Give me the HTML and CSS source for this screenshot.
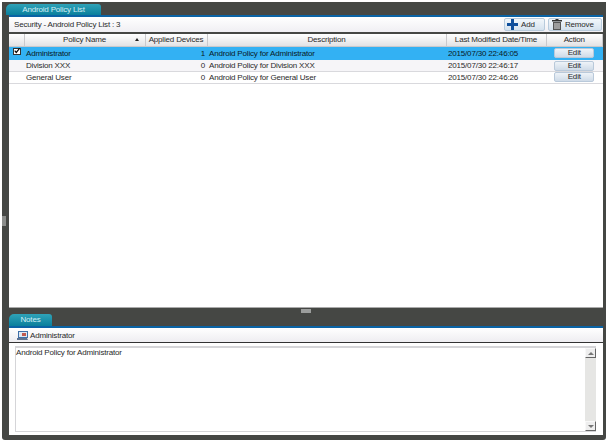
FILE: index.html
```html
<!DOCTYPE html>
<html lang="en">
<head>
  <meta charset="UTF-8" />
  <title>Android Policy List</title>
  <link rel="stylesheet" href="styles.css">
</head>
<body>
  <div class="window">
    <div class="handle-left"></div>

    <div class="tabbar tabbar-top">
      <div class="tab tab-list">Android Policy List</div>
    </div>
    <div class="toolbar">
      <span class="toolbar-title">Security - Android Policy List : 3</span>
      <div class="toolbar-buttons">
        <button class="tool-btn btn-add">
          <svg width="11" height="11" viewBox="0 0 11 11"><path d="M4 0h3v4h4v3H7v4H4V7H0V4h4z" fill="#0f4f9c"/></svg>
          <span>Add</span>
        </button>
        <button class="tool-btn btn-remove">
          <svg width="10" height="11" viewBox="0 0 10 11"><path d="M3.5 0h3v1H10v1.5H0V1h3.5z" fill="#333"/><path d="M1 3h8v8H1z" fill="#555"/><path d="M2.5 4h1v6h-1zM4.5 4h1v6h-1zM6.5 4h1v6h-1z" fill="#e4e4e4"/></svg>
          <span>Remove</span>
        </button>
      </div>
    </div>

    <div class="list-area">
      <table class="grid">
        <colgroup>
          <col class="col-check"><col class="col-name"><col class="col-devices"><col class="col-desc"><col class="col-date"><col class="col-action">
        </colgroup>
        <thead>
          <tr>
            <th></th>
            <th class="sorted">Policy Name<span class="sort-arrow"></span></th>
            <th>Applied Devices</th>
            <th>Description</th>
            <th>Last Modified Date/Time</th>
            <th>Action</th>
          </tr>
        </thead>
        <tbody>
          <tr class="selected">
            <td class="check-cell"><span class="checkbox"><svg width="8" height="8" viewBox="0 0 8 8"><path d="M1 3.5l2 2.5L7.5 0.5" fill="none" stroke="#000" stroke-width="1.6"/></svg></span></td>
            <td>Administrator</td>
            <td class="num">1</td>
            <td>Android Policy for Administrator</td>
            <td>2015/07/30 22:46:05</td>
            <td class="action-cell"><button class="edit-btn">Edit</button></td>
          </tr>
          <tr class="alt">
            <td></td>
            <td>Division XXX</td>
            <td class="num">0</td>
            <td>Android Policy for Division XXX</td>
            <td>2015/07/30 22:46:17</td>
            <td class="action-cell"><button class="edit-btn">Edit</button></td>
          </tr>
          <tr>
            <td></td>
            <td>General User</td>
            <td class="num">0</td>
            <td>Android Policy for General User</td>
            <td>2015/07/30 22:46:26</td>
            <td class="action-cell"><button class="edit-btn">Edit</button></td>
          </tr>
        </tbody>
      </table>
    </div>

    <div class="tabbar tabbar-notes">
      <div class="splitter"></div>
      <div class="tab tab-notes">Notes</div>
    </div>
    <div class="notes-head">
      <svg width="11" height="9" viewBox="0 0 11 9"><path d="M1 0h10v7H1z" fill="#3f6fa8"/><path d="M2 1h8v5H2z" fill="#dfe8f2"/><path d="M0 7h10l1 2H0z" fill="#5f7390"/><path d="M5 2h4v3H5z" fill="#c05a50"/></svg>
      <span>Administrator</span>
    </div>
    <div class="notes-body">
      <div class="notes-box">
        <div class="notes-text">Android Policy for Administrator</div>
        <div class="scrollbar">
          <div class="scroll-btn"><span class="arrow-up"></span></div>
          <div class="scroll-btn"><span class="arrow-down"></span></div>
        </div>
      </div>
    </div>
  </div>
</body>
</html>
```

FILE: styles.css
```css
* {
  box-sizing: border-box;
}
html, body {
  height: 100%;
}
body {
  margin: 0;
  padding: 2px 5px 3px 2px;
  background: #fff;
  font-family: "Liberation Sans", Arial, sans-serif;
  font-size: 8px;
  letter-spacing: -0.18px;
  color: #2a2a2a;
  overflow: hidden;
}
.window {
  position: relative;
  height: 100%;
  display: flex;
  flex-direction: column;
  padding: 0 3px 5px 7px;
  background: #454744;
  border-radius: 0 0 3px 3px;
}
.handle-left {
  position: absolute;
  left: 0;
  top: 214px;
  width: 4px;
  height: 10px;
  background: #8b8d8b;
}
.tabbar {
  display: flex;
  align-items: flex-end;
  flex: none;
}
.tabbar-top {
  height: 13px;
}
.tab {
  height: 11px;
  line-height: 11px;
  text-align: center;
  color: #d3eef5;
  background: linear-gradient(#2fa3b8, #0a7f9c);
  border-radius: 5px 3px 0 0;
}
.tab-list {
  width: 95px;
  margin-left: -3px;
}
.toolbar {
  flex: none;
  height: 17px;
  display: flex;
  align-items: center;
  justify-content: space-between;
  padding: 0 1px 1px 5px;
  border-top: 2px solid #0a63a5;
  background: linear-gradient(#fff, #f0eff3);
}
.toolbar-buttons {
  display: flex;
  gap: 3px;
}
.tool-btn {
  height: 13px;
  padding: 0;
  display: flex;
  align-items: center;
  gap: 3px;
  font: inherit;
  letter-spacing: inherit;
  color: #2a2a2a;
  background: linear-gradient(#f2f7fb, #d5e2ee);
  border: 1px solid #b8cbdc;
  border-radius: 2px;
}
.btn-add {
  width: 41px;
  padding-left: 2px;
}
.btn-remove {
  width: 54px;
  padding-left: 3px;
}
.list-area {
  flex: 1;
  margin-top: 2px;
  background: #fff;
  border-bottom: 1px solid #aaa;
  min-height: 0;
}
.grid {
  width: 100%;
  table-layout: fixed;
  border-collapse: collapse;
}
.col-check { width: 15px; }
.col-name { width: 121px; }
.col-devices { width: 62px; }
.col-desc { width: 239px; }
.col-date { width: 100px; }
.grid th {
  position: relative;
  height: 12px;
  padding: 0;
  font-weight: normal;
  text-align: center;
  background: linear-gradient(#fff, #e2e2e4);
  border-right: 1px solid #c9c9cc;
  border-bottom: 1px solid #c9c9cc;
  white-space: nowrap;
}
.sort-arrow {
  position: absolute;
  right: 6px;
  top: 4px;
  border-left: 2px solid transparent;
  border-right: 2px solid transparent;
  border-bottom: 3px solid #222;
}
.grid td {
  height: 12px;
  padding: 0 2px;
  white-space: nowrap;
  border-bottom: 1px solid #d9d9dd;
}
.grid tr.selected td {
  height: 13px;
  padding-top: 1px;
  background: #33b1f3;
  color: #0a1a26;
  border-bottom-color: #33b1f3;
}
.grid tr.alt td {
  padding-top: 1px;
  background: #f6f5f8;
}
.grid td.num {
  text-align: right;
}
.grid tr.selected td.check-cell {
  padding: 0 0 0 4px;
}
.checkbox {
  display: flex;
  align-items: center;
  justify-content: center;
  width: 8px;
  height: 7px;
  margin-top: -3px;
  background: #fff;
  border: 1px solid #333;
}
.grid tr td.action-cell {
  padding: 0;
  text-align: center;
}
.edit-btn {
  display: block;
  width: 40px;
  height: 10px;
  margin: 0 auto;
  padding: 0;
  font: inherit;
  letter-spacing: inherit;
  line-height: 8px;
  color: #2a2a2a;
  background: linear-gradient(#eef3f8, #cfdbe8);
  border: 1px solid #b9c9da;
  border-radius: 2px;
}
.alt .edit-btn {
  margin-top: 1px;
}
.tabbar-notes {
  position: relative;
  height: 18px;
}
.splitter {
  position: absolute;
  left: 292px;
  top: 1px;
  width: 10px;
  height: 4px;
  background: #9b9d9c;
}
.tab-notes {
  width: 43px;
  height: 12px;
  line-height: 12px;
}
.notes-head {
  flex: none;
  height: 17px;
  display: flex;
  align-items: center;
  gap: 2px;
  padding-left: 8px;
  border-top: 2px solid #0a63a5;
  border-bottom: 1px solid #333;
  background: linear-gradient(#fff, #eeedf1);
}
.notes-body {
  flex: none;
  height: 92px;
  padding: 3px 7px 3px 6px;
  background: #fff;
}
.notes-box {
  height: 100%;
  display: flex;
  border: 1px solid #d5d5d8;
  border-width: 2px 0 1px 1px;
}
.notes-text {
  flex: 1;
  padding: 0;
  line-height: 10px;
}
.scrollbar {
  flex: none;
  width: 11px;
  display: flex;
  flex-direction: column;
  justify-content: space-between;
  background: #e6e6e4;
}
.scroll-btn {
  height: 10px;
  display: flex;
  align-items: center;
  justify-content: center;
  background: #eee;
  border: 1px solid;
  border-color: #f8f8f8 #666 #666 #f8f8f8;
}
.arrow-up {
  border-left: 3px solid transparent;
  border-right: 3px solid transparent;
  border-bottom: 3px solid #777;
}
.arrow-down {
  border-left: 3px solid transparent;
  border-right: 3px solid transparent;
  border-top: 3px solid #777;
}
```
